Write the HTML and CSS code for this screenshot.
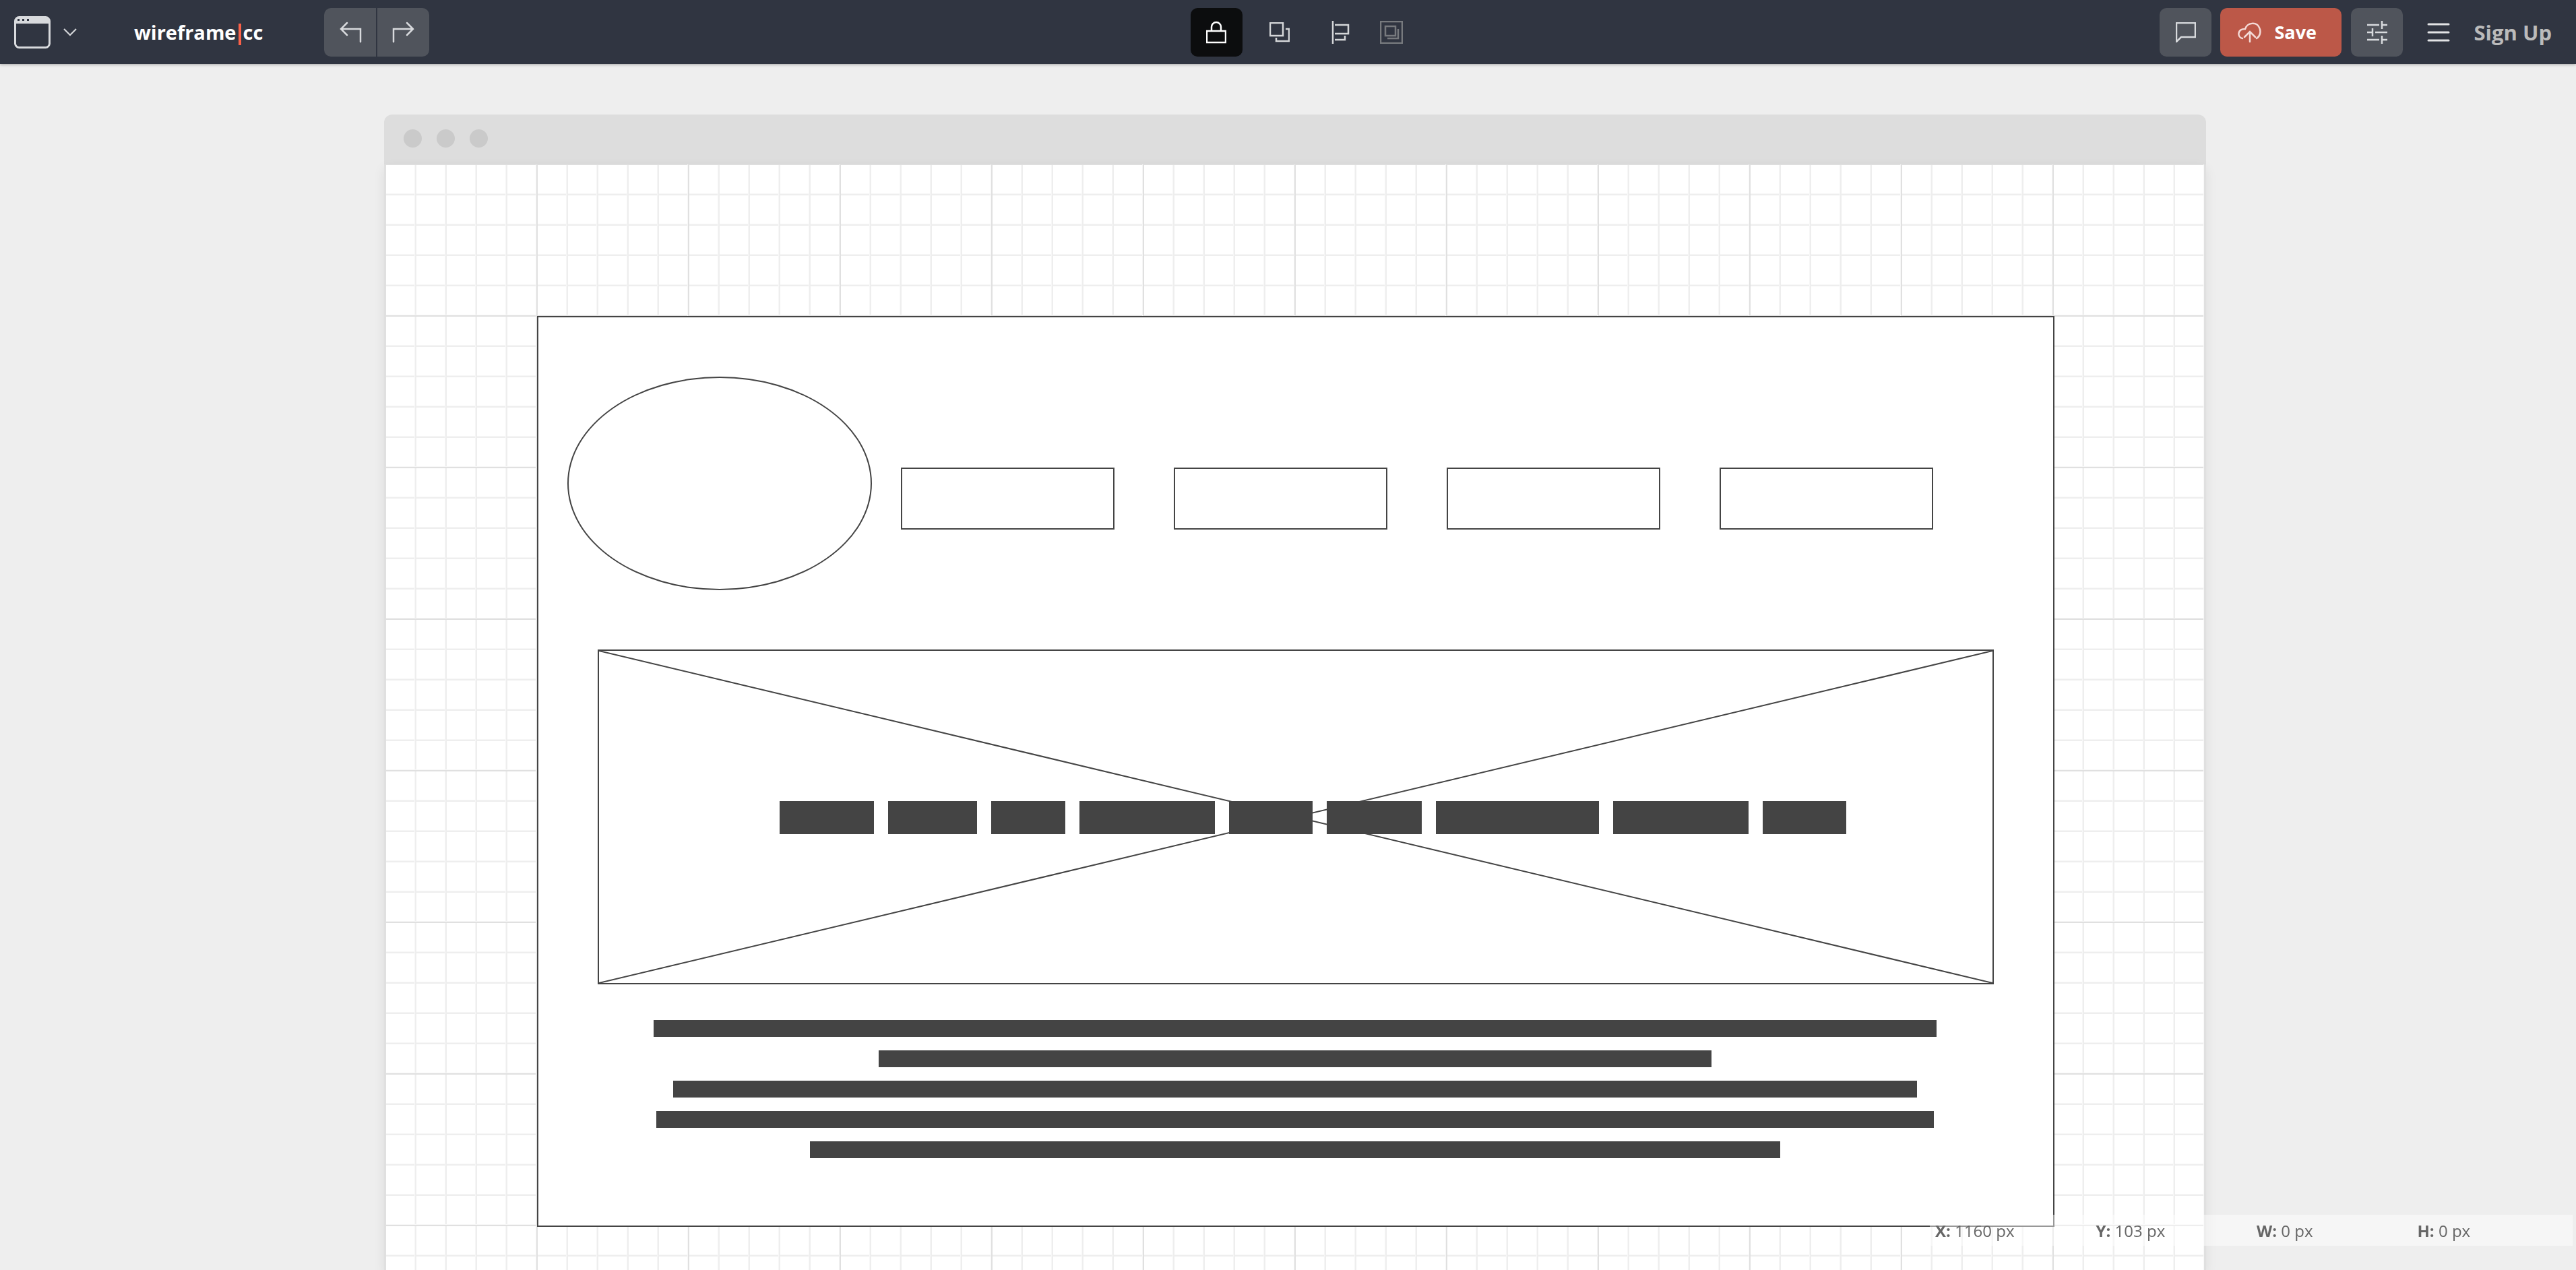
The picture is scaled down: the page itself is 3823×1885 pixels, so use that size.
FILE: index.html
```
<!DOCTYPE html>
<html lang="en">
<head>
<meta charset="utf-8">
<meta name="viewport" content="width=device-width, initial-scale=1">
<title>wireframe|cc</title>
<link rel="stylesheet" href="styles.css">
</head>
<body>
<header class="topbar">
  <div class="topbar-group topbar-left">
    <button class="device" type="button" aria-label="Choose device">
      <svg width="54" height="48" viewBox="0 0 54 48"><rect x="1.5" y="1.5" width="51" height="45" rx="6" fill="none" stroke="#d8dadd" stroke-width="3"/><path d="M1 11V7a6 6 0 0 1 6-6h40a6 6 0 0 1 6 6v4z" fill="#d8dadd"/><path d="M5 4h3v3H5zM12 4h3v3h-3zM19 4h3v3h-3z" fill="#303541"/></svg>
      <svg width="20" height="12" viewBox="0 0 20 12"><path d="M1 1l9 9 9-9" fill="none" stroke="#d8dadd" stroke-width="2"/></svg>
    </button>
    <a class="logo" href="#">wireframe<span class="logo-bar"></span>cc</a>
    <div class="history">
      <button class="tool filled" type="button" aria-label="Undo">
        <svg width="34" height="32" viewBox="0 0 34 32"><path d="M32 30V11H3M12 2L3 11l9 9" fill="none" stroke="#d8dadd" stroke-width="2.5" stroke-linecap="round"/></svg>
      </button>
      <button class="tool filled" type="button" aria-label="Redo">
        <svg width="34" height="32" viewBox="0 0 34 32"><path d="M2 30V11h29M22 2l9 9-9 9" fill="none" stroke="#d8dadd" stroke-width="2.5" stroke-linecap="round"/></svg>
      </button>
    </div>
  </div>
  <div class="topbar-group topbar-center">
    <button class="tool locked" type="button" aria-label="Lock">
      <svg width="30" height="34" viewBox="0 0 30 34"><path d="M1 15h28v17H1zM8 15V9a7 7 0 0 1 14 0v6" fill="none" stroke="#fff" stroke-width="2.5"/></svg>
    </button>
    <button class="icon-button" type="button" aria-label="Arrange">
      <svg width="30" height="30" viewBox="0 0 30 30"><path d="M1 1h19v19H1zM24 10h5v18H10v-5" fill="none" stroke="#d4d6d8" stroke-width="2.5"/></svg>
    </button>
    <button class="icon-button align" type="button" aria-label="Align">
      <svg width="28" height="34" viewBox="0 0 28 34"><path d="M2 0v34M5 6h20v13H5M5 28h15v-6" fill="none" stroke="#d4d6d8" stroke-width="2.5"/></svg>
    </button>
    <button class="icon-button" type="button" aria-label="Group" disabled>
      <svg width="34" height="34" viewBox="0 0 34 34"><path d="M1 1h32v32H1zM8 8h15v14H8zM27 12v14H11" fill="none" stroke="#777a7e" stroke-width="2.5"/></svg>
    </button>
  </div>
  <div class="topbar-group topbar-right">
    <button class="tool filled" type="button" aria-label="Comments">
      <svg width="30" height="30" viewBox="0 0 30 30"><path d="M1 1h28v21H8l-7 7z" fill="none" stroke="#d8dadd" stroke-width="2.5"/></svg>
    </button>
    <button class="save" type="button">
      <svg width="36" height="30" viewBox="0 0 36 30"><path d="M7 24C-1 22-1 10 11 10 14 0 28-1 32 8c3 6 1 13-4 16M18 29V14M10 22l8-8 8 8" fill="none" stroke="#f4dad6" stroke-width="2.5" stroke-linecap="round"/></svg>
      Save
    </button>
    <button class="tool filled" type="button" aria-label="Settings">
      <svg width="32" height="34" viewBox="0 0 32 34"><path d="M1 6h18M23 0v12M23 6h8M1 17h8M9 11v12M13 17h18M1 28h18M23 22v12M23 28h8" fill="none" stroke="#d8dadd" stroke-width="2.5"/></svg>
    </button>
    <button class="menu" type="button" aria-label="Menu">
      <svg width="34" height="30" viewBox="0 0 34 30"><path d="M2 3h30M2 15h30M2 27h30" fill="none" stroke="#e2e3e5" stroke-width="3" stroke-linecap="round"/></svg>
    </button>
    <a class="signup" href="#">Sign Up</a>
  </div>
</header>

<main class="workspace">
  <section class="browser">
    <div class="browser-bar"><i class="dot"></i><i class="dot"></i><i class="dot"></i></div>
    <div class="canvas">
      <div class="shape page"></div>
      <div class="shape ellipse"></div>
      <div class="shape nav nav-1"></div>
      <div class="shape nav nav-2"></div>
      <div class="shape nav nav-3"></div>
      <div class="shape nav nav-4"></div>
      <div class="shape image">
        <svg width="100%" height="100%" stroke="#444" stroke-width="2"><line x1="0" y1="0" x2="100%" y2="100%"/><line x1="0" y1="100%" x2="100%" y2="0"/></svg>
      </div>
      <div class="headline">
        <i style="width:140px"></i><i style="width:132px"></i><i style="width:110px"></i><i style="width:201px"></i><i style="width:124px"></i><i style="width:141px"></i><i style="width:242px"></i><i style="width:201px"></i><i style="width:124px"></i>
      </div>
      <div class="paragraph">
        <i style="width:1904px"></i><i style="width:1236px"></i><i style="width:1846px"></i><i style="width:1896px"></i><i style="width:1440px"></i>
      </div>
    </div>
  </section>
</main>

<footer class="status">
  <span><b>X:</b> 1160 px</span>
  <span><b>Y:</b> 103 px</span>
  <span><b>W:</b> 0 px</span>
  <span><b>H:</b> 0 px</span>
</footer>
</body>
</html>
```
FILE: styles.css
```
* {
  box-sizing: border-box;
}

body {
  margin: 0;
  min-height: 100vh;
  display: flex;
  flex-direction: column;
  overflow-x: hidden;
  background: #eee;
  font-family: "Open Sans", "Noto Sans", sans-serif;
}

button {
  margin: 0;
  padding: 0;
  border: 0;
  background: none;
  color: inherit;
  font: inherit;
}

svg {
  display: block;
  flex: none;
}

a {
  color: inherit;
  text-decoration: none;
}

/* Top bar */
.topbar {
  display: grid;
  grid-template-columns: 1fr auto 1fr;
  align-items: center;
  height: 95px;
  padding: 0 36px 0 21px;
  background: #303541;
  box-shadow: 0 1px 4px rgba(0, 0, 0, 0.3);
}

.topbar-group {
  display: flex;
  align-items: center;
}

.topbar-right {
  justify-content: flex-end;
}

.device {
  display: flex;
  align-items: center;
  gap: 19px;
}

.logo {
  display: flex;
  align-items: center;
  margin-left: 85px;
  color: #fff;
  font-size: 29px;
  font-weight: 700;
  line-height: 40px;
}

.logo-bar {
  width: 4px;
  height: 32px;
  margin: 6px 3px 0;
  background: #fb6148;
}

.history {
  display: flex;
  gap: 2px;
  margin-left: 91px;
  border-radius: 10px;
  overflow: hidden;
}

.tool {
  display: flex;
  align-items: center;
  justify-content: center;
  width: 77px;
  height: 72px;
}

.filled {
  background: #50545c;
}

.locked {
  background: #0c0d0e;
}

.locked,
.topbar-right .filled,
.save {
  border-radius: 10px;
}

.topbar-center {
  gap: 40px;
  padding-left: 40px;
}

.icon-button.align {
  margin: 0 4px 0 22px;
}

.save {
  display: flex;
  align-items: center;
  gap: 18px;
  width: 180px;
  height: 72px;
  margin: 0 14px 0 13px;
  padding-left: 26px;
  background: #bc5848;
  color: #fff;
  font-size: 27px;
  font-weight: 700;
}

.menu {
  margin: 0 35px 0 36px;
}

.signup {
  color: #bbb;
  font-size: 31px;
  font-weight: 700;
}

/* Workspace */
.workspace {
  flex: 1;
  display: flex;
  justify-content: center;
  padding: 75px 0 0 21px;
}

.browser {
  flex: none;
  display: flex;
  flex-direction: column;
  width: 2704px;
}

.browser-bar {
  display: flex;
  align-items: center;
  gap: 22px;
  height: 74px;
  padding: 0 29px 3px;
  border-radius: 12px 12px 0 0;
  background: #ddd;
}

.dot {
  width: 27px;
  height: 27px;
  border-radius: 50%;
  background: #cacaca;
}

.canvas {
  flex: 1;
  position: relative;
  min-height: 1640px;
  border: solid #e0e0e0;
  border-width: 0 2px;
  background-color: #fff;
  background-image:
    linear-gradient(to right, transparent 222px, #f7f7f7 222px 223px, #e0e0e0 223px),
    linear-gradient(to bottom, transparent 222px, #f7f7f7 222px 223px, #e0e0e0 223px),
    linear-gradient(to right, transparent 42px, #f7f7f7 42px 43px, #eee 43px),
    linear-gradient(to bottom, transparent 42px, #f7f7f7 42px 43px, #eee 43px);
  background-size: 225px 225px, 225px 225px, 45px 45px, 45px 45px;
  background-position: 1px 1px;
  box-shadow: 0 6px 16px rgba(0, 0, 0, 0.08);
}

/* Shapes on the drawing canvas */
.shape {
  position: absolute;
  border: 2px solid #444;
  background: #fff;
}

.page {
  left: 225px;
  top: 225px;
  width: 2252px;
  height: 1352px;
}

.ellipse {
  left: 270px;
  top: 315px;
  width: 452px;
  height: 317px;
  border-radius: 50%;
}

.nav {
  top: 450px;
  width: 317px;
  height: 92px;
}

.nav-1 {
  left: 765px;
}

.nav-2 {
  left: 1170px;
}

.nav-3 {
  left: 1575px;
}

.nav-4 {
  left: 1980px;
}

.image {
  left: 315px;
  top: 720px;
  width: 2072px;
  height: 497px;
}

.headline {
  position: absolute;
  left: 585px;
  top: 945px;
  display: flex;
  gap: 21px;
}

.headline i {
  height: 49px;
  background: #444;
}

.paragraph {
  position: absolute;
  left: 315px;
  top: 1270px;
  display: flex;
  flex-direction: column;
  align-items: center;
  gap: 20px;
  width: 2070px;
}

.paragraph i {
  height: 25px;
  background: #444;
}

/* Pointer read-out pinned over the canvas */
.status {
  position: fixed;
  right: 5px;
  bottom: 36px;
  display: grid;
  grid-template-columns: repeat(4, 1fr);
  width: 954px;
  padding-top: 2px;
  background: rgba(255, 255, 255, 0.45);
  color: #666;
  font-size: 24px;
  line-height: 44px;
}

.status span {
  padding-left: 8px;
}
```
